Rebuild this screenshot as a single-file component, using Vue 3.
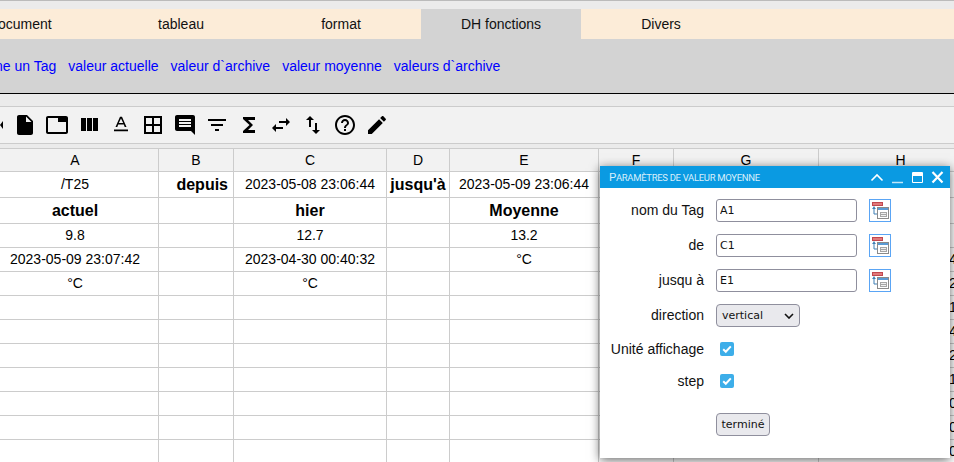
<script setup>
const tabs = [
  { label: 'document' },
  { label: 'tableau' },
  { label: 'format' },
  { label: 'DH fonctions', active: true },
  { label: 'Divers' }
]
const links = ['ne un Tag', 'valeur actuelle', 'valeur d`archive', 'valeur moyenne', 'valeurs d`archive']

const icons = [
  'M19 12l3-4v8z',
  'M6 2c-1.1 0-1.99.9-1.99 2L4 20c0 1.1.89 2 1.99 2H18c1.1 0 2-.9 2-2V8l-6-6H6zm7 7V3.5L18.5 9H13z',
  'M21 3H3c-1.1 0-2 .9-2 2v14c0 1.1.9 2 2 2h18c1.1 0 2-.9 2-2V5c0-1.1-.9-2-2-2zm0 16H3V5h10v4h8v10z',
  'M10 18h5V5h-5v13zm-6 0h5V5H4v13zM16 5v13h5V5h-5z',
  'M11 3.700L6.500 14h1.800l.9-2.500h5.600l.9 2.500h1.800L13 3.700h-2zm-1.200 6.300L12 5.500l2.200 4.500H9.800zM5 16.400h14v1.800H5z',
  'M3 3v18h18V3H3zm8 16H5v-6h6v6zm0-8H5V5h6v6zm8 8h-6v-6h6v6zm0-8h-6V5h6v6z',
  'M21.990 4c0-1.100-.890-2-1.990-2H4c-1.100 0-2 .9-2 2v12c0 1.100.9 2 2 2h14l4 4-.010-18zM18 14H6v-2h12v2zm0-3H6V9h12v2zm0-3H6V6h12v2z',
  'M10 18h4v-2h-4v2zM3 6v2h18V6H3zm3 7h12v-2H6v2z',
  'M18 4H6v2l6.500 6L6 18v2h12v-3h-7l5-5-5-5h7z',
  'M6.990 11L3 15l3.990 4v-3H14v-2H6.990v-3zM21 9l-3.990-4v3H10v2h7.010v3L21 9z',
  'M16 17.010V10h-2v7.010h-3L15 21l4-3.990h-3zM9 3L5 6.990h3V14h2V6.990h3L9 3z',
  'M11 18h2v-2h-2v2zm1-16C6.480 2 2 6.480 2 12s4.480 10 10 10 10-4.480 10-10S17.520 2 12 2zm0 18c-4.410 0-8-3.590-8-8s3.590-8 8-8 8 3.590 8 8-3.590 8-8 8zm0-14c-2.210 0-4 1.790-4 4h2c0-1.100.9-2 2-2s2 .9 2 2c0 2-3 1.750-3 5h2c0-2.250 3-2.500 3-5 0-2.210-1.790-4-4-4z',
  'M3 17.250V21h3.750L17.810 9.940l-3.750-3.750L3 17.250zM20.710 7.040c.39-.39.39-1.020 0-1.410l-2.340-2.340c-.39-.39-1.020-.39-1.410 0l-1.830 1.830 3.750 3.750 1.830-1.830z'
]

const columns = ['A', 'B', 'C', 'D', 'E', 'F', 'G', 'H']
const widths = [167, 75, 153, 63, 149, 75, 145, 164]

// b = bold, r = pushed to the right of the cell
const rows = [
  { h: 26, cells: [{ t: '/T25' }, { t: 'depuis', b: 1, r: 1 }, { t: '2023-05-08 23:06:44' }, { t: 'jusqu\'à', b: 1 }, { t: '2023-05-09 23:06:44' }] },
  { h: 26, cells: [{ t: 'actuel', b: 1 }, {}, { t: 'hier', b: 1 }, {}, { t: 'Moyenne', b: 1 }] },
  { h: 24, cells: [{ t: '9.8' }, {}, { t: '12.7' }, {}, { t: '13.2' }] },
  { h: 24, cells: [{ t: '2023-05-09 23:07:42' }, {}, { t: '2023-04-30 00:40:32' }, {}, { t: '°C' }], edge: '4' },
  { h: 24, cells: [{ t: '°C' }, {}, { t: '°C' }, {}, {}], edge: '2' },
  { h: 24, cells: [{}, {}, {}, {}, {}], edge: '1' },
  { h: 24, cells: [{}, {}, {}, {}, {}], edge: '4' },
  { h: 24, cells: [{}, {}, {}, {}, {}], edge: '2' },
  { h: 24, cells: [{}, {}, {}, {}, {}], edge: '1' },
  { h: 24, cells: [{}, {}, {}, {}, {}], edge: '0' },
  { h: 24, cells: [{}, {}, {}, {}, {}], edge: '0' },
  { h: 24, cells: [{}, {}, {}, {}, {}], edge: '0' }
]

const refFields = [
  { label: 'nom du Tag', value: 'A1' },
  { label: 'de', value: 'C1' },
  { label: 'jusqu à', value: 'E1' }
]
</script>

<template>
  <div class="page">
    <div class="tabs">
      <div v-for="tab in tabs" :key="tab.label" class="tab" :class="{ active: tab.active }">{{ tab.label }}</div>
    </div>
    <div class="ribbon">
      <a v-for="link in links" :key="link" class="ribbon-link">{{ link }}</a>
    </div>

    <div class="toolbar">
      <svg v-for="(d, i) in icons" :key="i" class="tool" viewBox="0 0 24 24" fill="#000"><path :d="d" /></svg>
    </div>

    <table class="sheet">
      <colgroup>
        <col v-for="(w, i) in widths" :key="i" :style="{ width: w + 'px' }" />
      </colgroup>
      <thead>
        <tr>
          <th v-for="c in columns" :key="c">{{ c }}</th>
        </tr>
      </thead>
      <tbody>
        <tr v-for="(row, r) in rows" :key="r" :style="{ height: row.h + 'px' }">
          <td v-for="(cell, c) in row.cells" :key="c" :class="{ bold: cell.b, right: cell.r }">{{ cell.t }}</td>
          <td></td>
          <td></td>
          <td class="edge">{{ row.edge }}</td>
        </tr>
      </tbody>
    </table>

    <div class="dialog">
      <div class="dialog-title">
        <span class="dialog-name">Paramètres de valeur moyenne</span>
        <svg class="win-icons" width="80" height="22" viewBox="0 0 80 22" fill="none" stroke="#fff">
          <path d="M1.500 14.500L7 9l5.500 5.500" stroke-width="1.600" />
          <path d="M22 16.500h11" stroke-width="1.500" opacity=".75" />
          <path d="M42.500 6.500h10v10h-10z" stroke-width="1" />
          <path d="M42 8.500h11" stroke-width="3" />
          <path d="M62.500 6l10 10.500M72.500 6l-10 10.500" stroke-width="2.200" />
        </svg>
      </div>
      <div class="dialog-body">
        <div v-for="field in refFields" :key="field.label" class="form-row">
          <span class="form-label">{{ field.label }}</span>
          <input class="ref-input" type="text" :value="field.value" readonly />
          <span class="ref-btn">
            <svg width="20" height="21" viewBox="0 0 20 21">
              <rect x="2.500" y="2.500" width="10" height="3" fill="#e07a7a" stroke="#c2474f" />
              <path d="M4 6.500v7.500h3" fill="none" stroke="#3d7fb5" stroke-width="1" />
              <path d="M2 9l2-2.500L6 9z" fill="#3d7fb5" />
              <rect x="7.500" y="7.500" width="11" height="11" fill="#fff" stroke="#8a8a8a" />
              <rect x="8" y="8" width="10" height="2" fill="#5a9bd5" />
              <rect x="10.500" y="12.500" width="6" height="4" fill="#eee" stroke="#a5a5a5" />
              <path d="M11 14.500h5" stroke="#a5a5a5" />
            </svg>
          </span>
        </div>
        <div class="form-row">
          <span class="form-label">direction</span>
          <div class="fake-select">
            <span>vertical</span>
            <svg width="10" height="6" viewBox="0 0 10 6" fill="none" stroke="#111" stroke-width="1.600">
              <path d="M1 1l4 4 4-4" />
            </svg>
          </div>
        </div>
        <div class="form-row check-row">
          <span class="form-label">Unité affichage</span>
          <span class="check">
            <svg width="14" height="14" viewBox="0 0 14 14" fill="none" stroke="#fff" stroke-width="2">
              <path d="M3.200 7.200l2.600 2.600 5-5.400" />
            </svg>
          </span>
        </div>
        <div class="form-row check-row">
          <span class="form-label">step</span>
          <span class="check">
            <svg width="14" height="14" viewBox="0 0 14 14" fill="none" stroke="#fff" stroke-width="2">
              <path d="M3.200 7.200l2.600 2.600 5-5.400" />
            </svg>
          </span>
        </div>
        <button class="done-btn" type="button">terminé</button>
      </div>
    </div>
  </div>
</template>

<style>
html, body {
  margin: 0;
  overflow: hidden;
}
</style>

<style scoped>
.page {
  position: relative;
  width: 954px;
  height: 462px;
  overflow: hidden;
  background: #ebebeb;
  border-top: 1px solid #bbb;
  box-sizing: border-box;
  font-family: "Liberation Sans", Arial, sans-serif;
  font-size: 14px;
  color: #000;
}

.tabs {
  display: flex;
  margin: 8px 0 0 -59px;
  width: 1100px;
  height: 30px;
  background: #fcecd8;
}

.tab {
  width: 160px;
  line-height: 30px;
  text-align: center;
  color: #111;
}

.tab.active {
  background: #d3d3d3;
}

.ribbon {
  display: flex;
  gap: 12px;
  height: 55px;
  padding-top: 19px;
  box-sizing: border-box;
  background: #d3d3d3;
  border-bottom: 1px solid #000;
  overflow: hidden;
}

.ribbon-link {
  color: #0000ff;
  line-height: 16px;
  white-space: nowrap;
}

.ribbon-link:first-child {
  margin-left: -5px;
}

.toolbar {
  display: flex;
  gap: 8px;
  align-items: center;
  height: 36px;
  margin-top: 12px;
  background: #f2f2f2;
  border-top: 1px solid #ccc;
  border-bottom: 1px solid #ccc;
  overflow: hidden;
}

.tool {
  flex: none;
  width: 24px;
  height: 24px;
}

.tool:first-child {
  margin-left: -19px;
}

.sheet {
  margin: 4px 0 0 -8px;
  table-layout: fixed;
  width: 991px;
  border-collapse: separate;
  border-spacing: 0;
  background: #fff;
  border-top: 1px solid #ccc;
}

th,
td {
  padding: 0;
  border-right: 1px solid #ccc;
  border-bottom: 1px solid #ccc;
  text-align: center;
  overflow: hidden;
  white-space: nowrap;
  box-sizing: border-box;
}

td {
  padding-bottom: 1px;
}

th {
  height: 23px;
  background: #f2f2f2;
  font-weight: 400;
}

.bold {
  padding-bottom: 0;
  font-size: 16px;
  font-weight: 700;
}

.right {
  padding-right: 5px;
  text-align: right;
}

.edge {
  padding-left: 130px;
  text-align: left;
}

.dialog {
  position: absolute;
  left: 600px;
  top: 165px;
  width: 350px;
  height: 292px;
  background: #fff;
  box-shadow: 0 2px 10px rgba(0, 0, 0, 0.6);
}

.dialog-title {
  display: flex;
  align-items: center;
  justify-content: space-between;
  height: 22px;
  padding-left: 9px;
  background: #0a9ae2;
}

.dialog-name {
  font-family: Roboto, sans-serif;
  font-size: 9.5px;
  letter-spacing: -0.32px;
  text-transform: uppercase;
  color: #d8eefb;
  white-space: nowrap;
}

.dialog-name::first-letter {
  font-size: 11.5px;
}

.win-icons {
  flex: none;
}

.dialog-body {
  display: flex;
  flex-direction: column;
  padding-top: 5px;
}

.form-row {
  display: flex;
  align-items: center;
  height: 35px;
}

.form-label {
  width: 104px;
  margin-right: 12px;
  margin-bottom: 2px;
  text-align: right;
  white-space: nowrap;
  color: #111;
}

.ref-input {
  width: 141px;
  height: 23px;
  padding: 0 3px;
  box-sizing: border-box;
  border: 1px solid #8f8f9d;
  border-radius: 3px;
  background: #fff;
  font-family: "DejaVu Sans", sans-serif;
  font-size: 11px;
  color: #111;
  outline: none;
}

.ref-btn {
  display: flex;
  margin-left: 12px;
  width: 22px;
  height: 23px;
  box-sizing: border-box;
  border: 1px solid #5aa5f5;
}

.fake-select {
  display: flex;
  align-items: center;
  justify-content: space-between;
  width: 84px;
  height: 23px;
  padding: 0 5px;
  box-sizing: border-box;
  border: 1px solid #8f8f9d;
  border-radius: 4px;
  background: #e9e9ed;
  font-family: "DejaVu Sans", sans-serif;
  font-size: 11px;
  color: #111;
}

.check-row {
  height: 32px;
}

.check-row .form-label {
  margin-bottom: 0;
}

.check {
  display: block;
  margin-left: 4px;
  width: 14px;
  height: 14px;
  border-radius: 2px;
  background: #3daee9;
}

.check svg {
  display: block;
}

.done-btn {
  align-self: flex-start;
  margin: 16px 0 0 116px;
  width: 54px;
  height: 23px;
  padding: 0;
  box-sizing: border-box;
  border: 1px solid #8f8f9d;
  border-radius: 4px;
  background: #e9e9ed;
  font-family: "DejaVu Sans", sans-serif;
  font-size: 11px;
  color: #111;
}
</style>
